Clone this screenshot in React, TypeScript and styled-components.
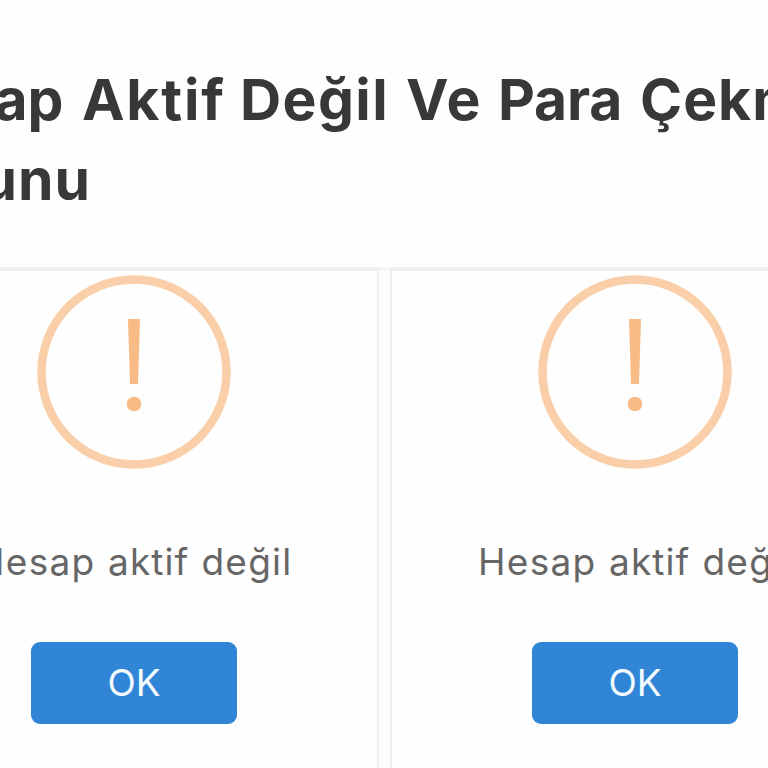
import React from "react";
import styled, { createGlobalStyle } from "styled-components";

const GlobalStyle = createGlobalStyle`
  *, *::before, *::after { box-sizing: border-box; }
  html, body { margin: 0; background: #fefefe; overflow: hidden; }
  body { font-family: Inter, "Open Sans", sans-serif; }
`;

const Page = styled.main`
  width: 768px;
  height: 768px;
  overflow: hidden;
  background: #fefefe;
`;

const Title = styled.h1`
  display: flex;
  flex-direction: column;
  height: 267px;
  margin: 0;
  padding-top: 60px;
  color: #383838;
  font-size: 57px;
  font-weight: 700;
  line-height: 80px;
`;

const TitleLine = styled.span<{ $start: number }>`
  display: flex;
  margin-left: ${(p) => p.$start}px;
  white-space: nowrap;
`;

const Word = styled.span<{ $width: number; $spacing?: number }>`
  flex: 0 0 ${(p) => p.$width}px;
  letter-spacing: ${(p) => p.$spacing ?? 0}px;
  white-space: nowrap;
`;

const Gallery = styled.section`
  display: flex;
  gap: 11px;
  width: 991px;
  height: 501px;
  margin-left: -111px;
  background: linear-gradient(#f5f5f5 0 3px, #fefefe 4px);
`;

const Card = styled.article`
  display: flex;
  flex: 0 0 490px;
  flex-direction: column;
  align-items: center;
  border: solid #eee;
  border-width: 4px 2px 0;
`;

const Warning = styled.svg`
  display: block;
  flex: none;
  width: 196px;
  height: 196px;
  margin-top: 3px;
`;

const Message = styled.p`
  display: flex;
  width: 314px;
  margin: 67px 0 0;
  color: #666;
  font-size: 37px;
  font-weight: 400;
  line-height: 50px;
`;

const Confirm = styled.button`
  width: 206px;
  height: 82px;
  margin-top: 55px;
  padding: 0;
  border: 0;
  border-radius: 9px;
  background: #3085d6;
  color: #f4fbff;
  font: 400 37px/82px Inter, sans-serif;
`;

function AccountNotice() {
  return (
    <Card>
      <Warning viewBox="0 0 196 196" aria-hidden="true">
        <circle cx="98" cy="98" r="92.5" fill="none" stroke="#facea8" strokeWidth="8.5" />
        <path d="M92 45h12l-2 65h-8z" fill="#f8bb86" />
        <circle cx="98" cy="130" r="7.3" fill="#f8bb86" />
      </Warning>
      <Message>
        <Word $width={131} $spacing={1.3}>Hesap</Word>
        <Word $width={93.5} $spacing={1.1}>aktif</Word>
        <Word $width={89.5} $spacing={1.2}>değil</Word>
      </Message>
      <Confirm>OK</Confirm>
    </Card>
  );
}

export default function App() {
  return (
    <>
      <GlobalStyle />
      <Page>
        <Title>
          <TitleLine $start={-114}>
            <Word $width={196}>Hesap</Word>
            <Word $width={158} $spacing={1.8}>Aktif</Word>
            <Word $width={166} $spacing={1.4}>Değil</Word>
            <Word $width={92} $spacing={1.5}>Ve</Word>
            <Word $width={142} $spacing={-0.2}>Para</Word>
            <Word $width={200} $spacing={1}>Çekme</Word>
          </TitleLine>
          <TitleLine $start={-117}>
            <Word $width={210} $spacing={1}>Sorunu</Word>
          </TitleLine>
        </Title>
        <Gallery>
          <AccountNotice />
          <AccountNotice />
        </Gallery>
      </Page>
    </>
  );
}
